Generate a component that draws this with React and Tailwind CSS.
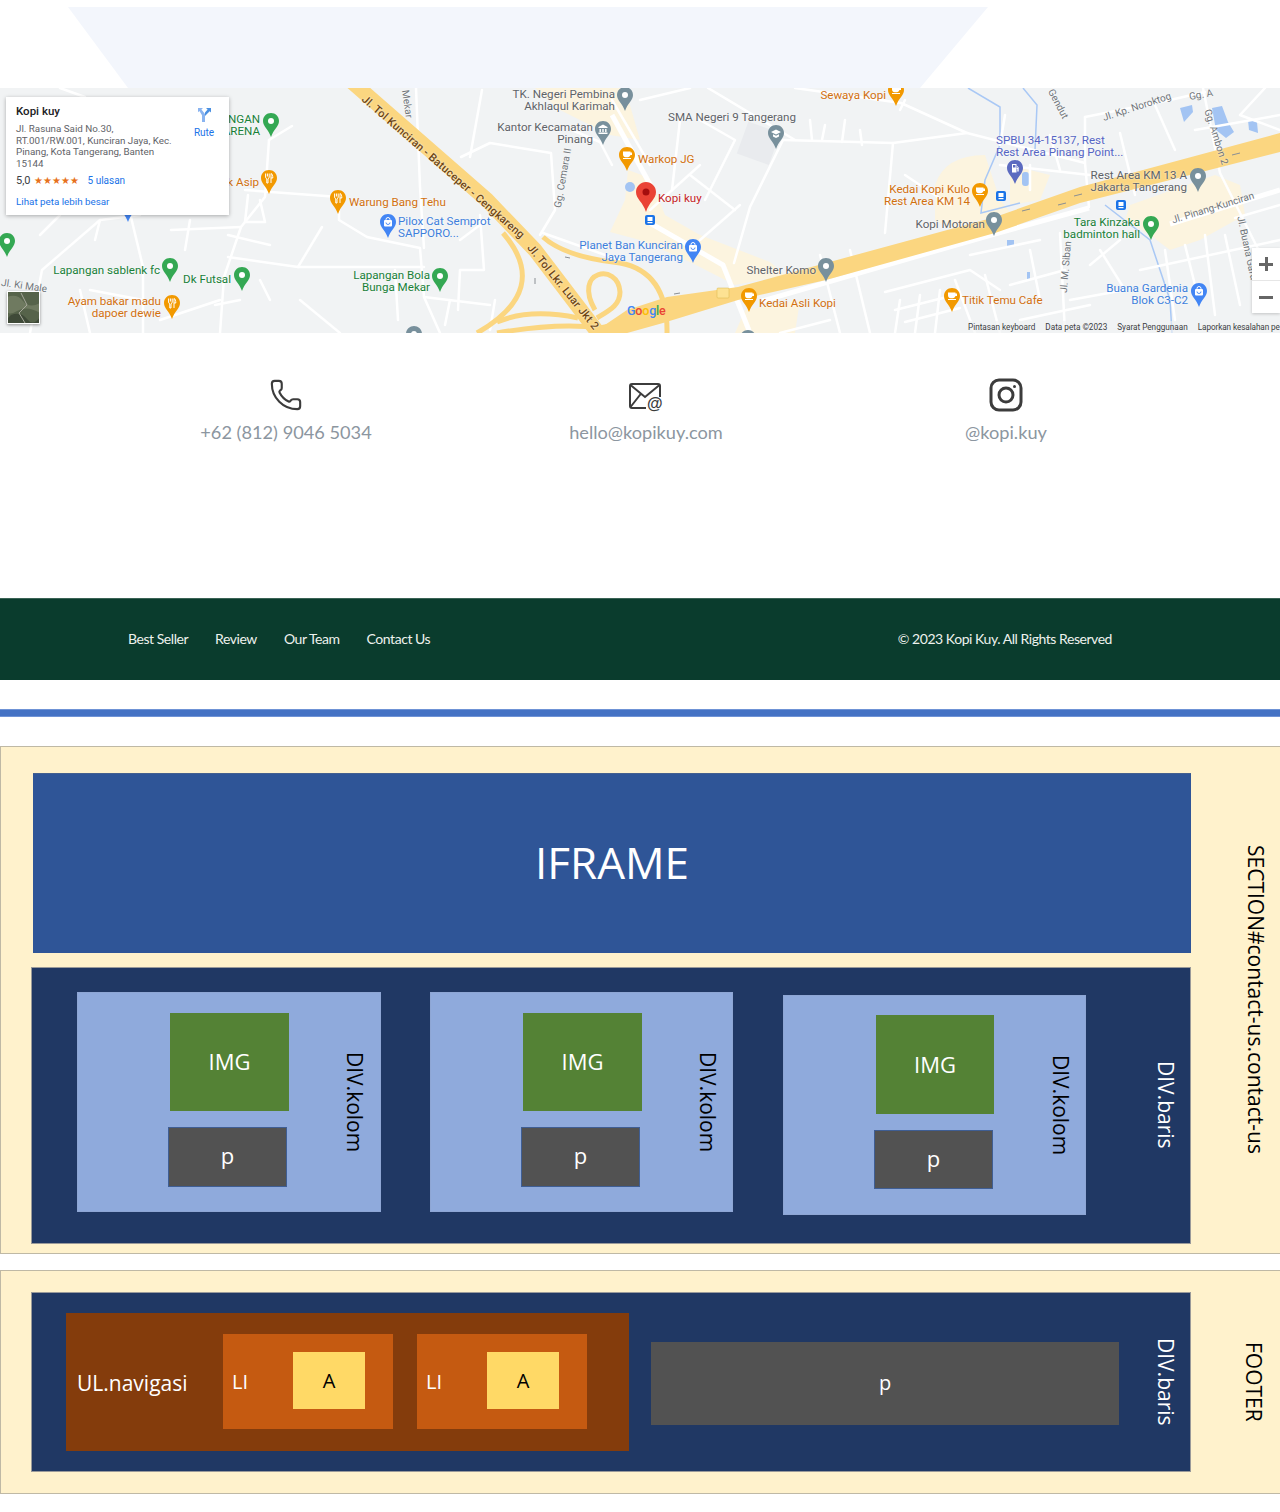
import React from 'react';
import { Phone } from 'lucide-react';

// everything on the map is in page coordinates, the svg viewBox starts at y=88
const pale = [
  'M535 88 L625 88 L640 140 L610 135 L560 110 Z',
  'M628 170 L650 178 L665 215 L700 235 L770 262 L785 275 L735 285 L690 262 L640 240 L610 232 L625 200 Z',
  'M935 185 Q945 155 985 155 L1000 200 L1010 212 L950 228 L935 220 Z',
  'M1130 205 L1215 175 L1240 185 L1245 215 L1200 240 L1170 250 L1150 235 L1125 220 Z',
  'M745 310 L800 300 L795 333 L735 333 Z',
  'M1010 165 L1050 175 L1040 200 L1010 205 Z',
];

const minorRoads = [
  'M245 190 L339 197 L339 220 L367 237 L420 248 L424 297 L490 305',
  'M269 140 L265 197 L241 227 L224 277 L220 333',
  'M130 213 L143 267 L143 333',
  'M171 230 L241 227',
  'M228 257 L298 267 L424 267',
  'M298 267 L322 227',
  'M416 88 L420 187 L424 248',
  'M461 157 L490 143 L551 153 L555 210 L540 235',
  'M482 90 L470 157',
  'M269 140 L292 126',
  'M60 88 L85 97',
  'M140 215 L100 220 L42 270 L30 333',
  'M90 290 L143 300',
  'M160 320 L220 300',
  'M190 220 L185 250',
  'M260 200 L265 222 L245 222',
  'M248 195 L245 222',
  'M228 235 L270 245',
  'M60 215 L40 235',
  'M100 220 L95 240',
  'M80 290 L90 333',
  'M240 300 L215 305',
  'M260 280 L270 300',
  'M300 300 L340 333',
  'M395 270 L398 320',
  'M424 297 L440 333',
  'M450 300 L445 325',
  'M495 300 L490 330',
  'M460 240 L500 210',
  'M480 215 L484 270 L460 270 L458 310',
  'M572 130 L600 142 L612 165',
  'M612 100 L650 165',
  'M543 233 L625 262',
  'M795 88 L901 103 L967 133 L893 143 L783 140',
  'M783 140 L750 207 L734 263',
  'M893 143 L885 233',
  'M967 133 L1085 163 L1089 207',
  'M1085 117 L1170 100 L1205 92',
  'M1085 117 L1085 163',
  'M1203 88 L1220 173 L1265 263',
  'M1120 133 L1135 195',
  'M1155 105 L1175 150',
  'M700 120 L735 140 L705 200',
  'M680 120 L672 190',
  'M690 175 L735 210',
  'M650 210 L700 165',
  'M700 240 L740 205',
  'M708 88 L795 140',
  'M810 120 L812 140',
  'M825 125 L822 140',
  'M845 120 L842 142',
  'M860 130 L862 145',
  'M900 110 L905 100',
  'M1060 233 L1065 333',
  'M885 292 L970 270 L1000 290',
  'M895 333 L900 300',
  'M915 333 L920 295',
  'M935 333 L940 290',
  'M955 280 L975 333',
  'M895 310 L955 295',
  'M905 322 L960 308',
  'M985 275 L1000 333',
  'M970 255 L1040 240',
  'M1010 285 L1065 270',
  'M1020 320 L1090 305',
  'M1030 250 L1040 300',
  'M1100 250 L1125 290 L1070 300',
  'M1120 240 L1090 265',
  'M1165 250 L1175 320',
  'M1185 245 L1195 285',
  'M1205 235 L1215 315',
  'M1225 235 L1240 305',
  'M1235 218 L1280 205',
  'M1140 270 L1280 240',
  'M1265 88 L1240 115 L1280 130',
  'M1195 130 L1280 115',
  'M1000 165 L1090 175',
  'M1030 165 L1030 190',
  'M1000 145 L1005 115',
  'M1050 135 L1060 170',
  'M905 175 L950 205',
  'M820 255 L840 333',
  'M850 250 L870 333',
  'M780 333 L830 320',
  'M640 100 L690 88',
];

const majorRoads = [
  'M650 223 L723 265 L750 333',
  'M612 115 L652 188',
  'M762 301 L991 235 L1089 208',
  'M1170 224 L1280 190',
];

const yellowRoads = [
  'M503 233 Q552 290 477 333',
  'M595 310 C572 270 618 262 620 292 C620 305 610 310 597 318',
  'M543 237 Q565 257 620 263 Q668 272 667 333',
  'M497 322 Q530 308 578 318',
  'M497 333 Q560 322 600 328 Q640 320 700 298',
];

// tip of each pin = top + 24
const pins = [
  { x: 128, top: 198, kind: 'shop', color: '#4285f4' },
  { x: 271, top: 113, kind: 'dot', color: '#34a853' },
  { x: 7, top: 233, kind: 'dot', color: '#34a853' },
  { x: 170, top: 258, kind: 'dot', color: '#34a853' },
  { x: 242, top: 267, kind: 'dot', color: '#34a853' },
  { x: 440, top: 268, kind: 'dot', color: '#34a853' },
  { x: 1151, top: 216, kind: 'dot', color: '#34a853' },
  { x: 269, top: 170, kind: 'fork', color: '#f29900' },
  { x: 338, top: 190, kind: 'fork', color: '#f29900' },
  { x: 172, top: 295, kind: 'fork', color: '#f29900' },
  { x: 388, top: 214, kind: 'shop', color: '#4285f4' },
  { x: 693, top: 239, kind: 'shop', color: '#4285f4' },
  { x: 1199, top: 283, kind: 'shop', color: '#4285f4' },
  { x: 625, top: 87, kind: 'dot', color: '#78909c' },
  { x: 603, top: 121, kind: 'bank', color: '#78909c' },
  { x: 776, top: 125, kind: 'cap', color: '#78909c' },
  { x: 994, top: 212, kind: 'dot', color: '#78909c' },
  { x: 826, top: 258, kind: 'dot', color: '#78909c' },
  { x: 1198, top: 168, kind: 'dot', color: '#78909c' },
  { x: 414, top: 326, kind: 'dot', color: '#78909c' },
  { x: 748, top: 330, kind: 'dot', color: '#78909c' },
  { x: 1015, top: 160, kind: 'fuel', color: '#5c6bc0' },
  { x: 627, top: 147, kind: 'cup', color: '#f29900' },
  { x: 896, top: 82, kind: 'cup', color: '#f29900' },
  { x: 980, top: 183, kind: 'cup', color: '#f29900' },
  { x: 749, top: 288, kind: 'cup', color: '#f29900' },
  { x: 952, top: 288, kind: 'cup', color: '#f29900' },
];

const transit = [[650, 220], [1001, 196], [1121, 205]];

const GREEN = 'text-[#188038]';
const ORANGE = 'text-[#d1700f]';
const BLUE = 'text-[#3d7fdc]';
const GRAY = 'text-[#5f6368]';
const PURPLE = 'text-[#5565c4]';

const labels = [
  { lines: ['NGAN', 'ARENA'], x: 260, y: 119, right: true, color: GREEN },
  { lines: ['k Asip'], x: 259, y: 182, right: true, color: ORANGE },
  { lines: ['Warung Bang Tehu'], x: 349, y: 202, color: ORANGE },
  { lines: ['Pilox Cat Semprot', 'SAPPORO...'], x: 398, y: 221, color: BLUE },
  { lines: ['Lapangan sablenk fc'], x: 160, y: 270, right: true, color: GREEN },
  { lines: ['Dk Futsal'], x: 231, y: 279, right: true, color: GREEN },
  { lines: ['Lapangan Bola', 'Bunga Mekar'], x: 430, y: 275, right: true, color: GREEN },
  { lines: ['Ayam bakar madu', 'dapoer dewie'], x: 161, y: 301, right: true, color: ORANGE },
  { lines: ['TK. Negeri Pembina', 'Akhlaqul Karimah'], x: 615, y: 94, right: true, color: GRAY },
  { lines: ['Kantor Kecamatan', 'Pinang'], x: 593, y: 127, right: true, color: GRAY },
  { lines: ['Warkop JG'], x: 638, y: 159, color: ORANGE },
  { lines: ['Kopi kuy'], x: 658, y: 198, color: 'text-[#c5221f]' },
  { lines: ['Planet Ban Kunciran', 'Jaya Tangerang'], x: 683, y: 245, right: true, color: BLUE },
  { lines: ['Sewaya Kopi'], x: 886, y: 95, right: true, color: ORANGE },
  { lines: ['SMA Negeri 9 Tangerang'], x: 668, y: 117, color: GRAY },
  { lines: ['SPBU 34-15137, Rest', 'Rest Area Pinang Point...'], x: 996, y: 140, color: PURPLE },
  { lines: ['Kedai Kopi Kulo', 'Rest Area KM 14'], x: 970, y: 189, right: true, color: ORANGE },
  { lines: ['Kopi Motoran'], x: 985, y: 224, right: true, color: GRAY },
  { lines: ['Rest Area KM 13 A', 'Jakarta Tangerang'], x: 1187, y: 175, right: true, color: GRAY },
  { lines: ['Tara Kinzaka', 'badminton hall'], x: 1140, y: 222, right: true, color: GREEN },
  { lines: ['Shelter Komo'], x: 816, y: 270, right: true, color: GRAY },
  { lines: ['Kedai Asli Kopi'], x: 759, y: 303, color: ORANGE },
  { lines: ['Titik Temu Cafe'], x: 962, y: 300, color: ORANGE },
  { lines: ['Buana Gardenia', 'Blok C3-C2'], x: 1188, y: 288, right: true, color: BLUE },
];

const BROWN = 'text-[#6d4513] font-medium text-[11px] tracking-[0.2px]';
const STREET = 'text-[#70757a] text-[10px]';

const roadLabels = [
  { text: 'Jl. Tol Kunciran - Batuceper - Cengkareng', x: 443, y: 167, deg: 41, cls: BROWN },
  { text: 'Jl. Tol Lkr. Luar Jkt 2', x: 563, y: 287, deg: 51, cls: BROWN },
  { text: 'Mekar', x: 407, y: 104, deg: 82, cls: STREET },
  { text: 'Gg. Cemara II', x: 563, y: 178, deg: -80, cls: STREET },
  { text: 'Gendut', x: 1058, y: 104, deg: 62, cls: STREET },
  { text: 'Jl. Kp. Noroktog', x: 1137, y: 107, deg: -18, cls: STREET },
  { text: 'Gg. A', x: 1201, y: 95, deg: -10, cls: STREET },
  { text: 'Gg. Ambon 2', x: 1216, y: 137, deg: 72, cls: STREET },
  { text: 'Jl. Pinang-Kunciran', x: 1213, y: 208, deg: -17, cls: STREET },
  { text: 'Jl. Buana Garu', x: 1247, y: 248, deg: 78, cls: STREET },
  { text: 'Jl. M. Siban', x: 1066, y: 267, deg: -85, cls: STREET },
  { text: 'Jl. Ki Male', x: 24, y: 286, deg: 8, cls: STREET },
];

const Glyph = ({ kind }) => {
  if (kind === 'dot') return <circle cx="8" cy="8" r="3" fill="#fff" />;
  if (kind === 'fork') {
    return (
      <path
        d="M4.600 3.500v3.600c0 1 .6 1.500 1.200 1.700V13h1.200V8.800c.6-.2 1.200-.7 1.200-1.700V3.500M6.400 3.500v3M10 13V3.500c1.400.4 1.800 2.400 1.800 4.500H10"
        fill="none"
        stroke="#fff"
        strokeWidth="1"
      />
    );
  }
  if (kind === 'cup') {
    return (
      <g fill="#fff">
        <path d="M4 4.500h7.500v1H13v2.500h-1.600c-.3 1.400-1.400 2.200-2.600 2.200H6.600C5.200 10.200 4 9 4 7.500z" />
        <rect x="4" y="11" width="8" height="1" />
      </g>
    );
  }
  if (kind === 'shop') {
    return (
      <g>
        <rect x="4" y="6" width="8" height="6.500" rx="1" fill="#fff" />
        <path d="M6 7V5.500a2 2 0 0 1 4 0V7" fill="none" stroke="#fff" strokeWidth="1" />
        <path d="M6 8.500a2 2 0 0 0 4 0" fill="none" stroke="#4285f4" strokeWidth="0.900" />
      </g>
    );
  }
  if (kind === 'bank') {
    return <path d="M8 3.500 12.500 6v1h-9V6zM4.500 8h1.400v3H4.500zM7.300 8h1.400v3H7.300zM10.100 8h1.400v3h-1.400zM3.500 11.500h9V13h-9z" fill="#fff" />;
  }
  if (kind === 'cap') {
    return <path d="M8 4.500 13 7l-5 2.500L3 7zM5 9.300 8 10.800l3-1.500V11.500L8 13l-3-1.500z" fill="#fff" />;
  }
  return <path d="M5 4h4.500v8.500H5zM6 5v2.500h2.500V5zM10.200 6l1.500 1.500V11a.7.7 0 0 1-1.400 0V9h-.5V8h1V7.800L9.900 6.700z" fill="#fff" />;
};

const Pin = ({ x, top, kind, color }) => (
  <g transform={`translate(${x - 8} ${top})`}>
    <path d="M8 0C3.500 0 0 3.500 0 8c0 5.500 5.500 8.500 8 16 2.500-7.500 8-10.500 8-16 0-4.500-3.500-8-8-8z" fill={color} />
    <Glyph kind={kind} />
  </g>
);

const MapDrawing = () => (
  <svg className="absolute inset-0 block" width="1280" height="245" viewBox="0 88 1280 245">
    <rect x="0" y="88" width="1280" height="245" fill="#f1f3f4" />
    {pale.map((d) => <path key={d} d={d} fill="#fcf4df" />)}
    <rect x="742" y="126" width="34" height="34" fill="#e9ebee" transform="rotate(20 758 142)" />

    <g fill="none" stroke="#a9c8f5" strokeWidth="1.500">
      <path d="M968 88 L1000 107 L1000 145 L985 180 L981 213 L1020 203" />
      <path d="M1105 205 L1150 240 L1170 300 L1172 333" />
      <path d="M1023 88 L1037 105 L1035 150" />
    </g>
    <g fill="#a3c4f3">
      <path d="M1180 108 L1192 105 L1193 112 L1184 122z" />
      <path d="M1212 108 L1222 106 L1228 122 L1234 132 L1226 138 L1216 130z" />
      <path d="M1248 120 L1257 122 L1258 133 L1249 130z" />
      <rect x="1007" y="240" width="7" height="6" />
      <rect x="1022" y="172" width="7" height="14" rx="3" />
      <rect x="1027" y="272" width="3" height="8" />
      <circle cx="630" cy="187" r="5" />
    </g>

    <g fill="none" stroke="#fff" strokeWidth="2.500" strokeLinejoin="round" strokeLinecap="round">
      {minorRoads.map((d) => <path key={d} d={d} />)}
    </g>
    <g fill="none" stroke="#fff" strokeWidth="5" strokeLinejoin="round">
      {majorRoads.map((d) => <path key={d} d={d} />)}
    </g>

    <g fill="none" stroke="#fbd680" strokeWidth="5" strokeLinejoin="round">
      {yellowRoads.map((d) => <path key={d} d={d} />)}
    </g>
    <path d="M352 82 L487 200 L535 250 L602 338" fill="none" stroke="#fbd680" strokeWidth="15" strokeLinejoin="round" />
    <path d="M590 335 L627 310 L667 297 L738 287 L826 263 L995 217 L1080 187 L1280 133 L1280 152 L1080 203 L995 233 L826 280 L738 300 L663 323 L620 335Z" fill="#fbd680" />

    <g fill="none" stroke="#8a8f94" strokeWidth="1">
      <path d="M1074 196 L1082 194M1022 211 L1030 209M1240 153 L1232 155M1066 203 L1058 205" />
      <path d="M565 257 L570 258M674 294 L680 293M535 284 L535 278" />
    </g>

    <rect x="717" y="288" width="12" height="10" rx="1" fill="#fde293" stroke="#d9b44a" strokeWidth="0.500" />

    {pins.map((p) => <Pin key={`${p.x}-${p.top}`} {...p} />)}

    {transit.map(([x, y]) => (
      <g key={x} transform={`translate(${x - 5} ${y - 5})`}>
        <rect width="10" height="10" rx="2" fill="#1a73e8" />
        <rect x="2.500" y="2" width="5" height="4" fill="#fff" />
        <rect x="2.500" y="7" width="5" height="1.200" fill="#fff" />
      </g>
    ))}

    <g transform="translate(636 182)">
      <path d="M10 0C4.500 0 0 4.500 0 10c0 7 7 10 10 20 3-10 10-13 10-20 0-5.500-4.500-10-10-10z" fill="#ea4335" />
      <circle cx="10" cy="10" r="3.500" fill="#a50e0e" />
    </g>
  </svg>
);

const RouteIcon = () => (
  <svg width="15" height="16" viewBox="0 0 15 16">
    <path d="M1 1h5l-1.600 1.600L8 7v8H5V8.200L2.400 4 1 5.300z" fill="#8ab4f0" />
    <path d="M14 1 9 1l1.600 1.600L8 5.500V9l4.700-4.700L14 5.600z" fill="#4a90e2" />
  </svg>
);

const Satellite = () => (
  <svg className="absolute left-[7px] top-[203px] shadow-[0_1px_3px_rgba(0,0,0,0.4)]" width="33" height="33" viewBox="0 0 33 33">
    <rect width="33" height="33" fill="#56634a" />
    <path d="M0 6 Q10 2 16 10 T33 12 V22 Q20 14 10 20 T0 18Z" fill="#6f7a60" />
    <path d="M4 24 Q14 20 20 28 T33 26 V33 H0 V28Z" fill="#3f4a38" />
    <path d="M14 2 L20 14 L12 22 L18 32" fill="none" stroke="#a6a89a" strokeWidth="1" />
    <rect x="0.500" y="0.500" width="32" height="32" fill="none" stroke="#fff" />
  </svg>
);

const InfoCard = () => (
  <div className="absolute left-[6px] top-[9px] z-10 flex h-[118px] w-[223px] flex-col bg-white pl-[10px] pt-[8px] shadow-[0_1px_4px_rgba(0,0,0,0.3)] font-['Roboto',sans-serif]">
    <div className="flex">
      <div className="w-[165px]">
        <p className="text-[11.500px] font-medium leading-[13px] text-[#202124]">Kopi kuy</p>
        <p className="mt-[5px] text-[9.800px] leading-[11.500px] text-[#5f6368]">
          Jl. Rasuna Said No.30, RT.001/RW.001, Kunciran Jaya, Kec. Pinang, Kota Tangerang, Banten 15144
        </p>
      </div>
      <div className="ml-[5px] flex w-[36px] flex-col items-center pt-[2px]">
        <RouteIcon />
        <span className="mt-[4px] text-[10px] leading-[12px] text-[#1a73e8]">Rute</span>
      </div>
    </div>
    <div className="mt-[5px] flex h-[14px] items-center">
      <span className="text-[11px] leading-[14px] text-[#3c4043]">5,0</span>
      <span className="ml-[3px] w-[46px] whitespace-nowrap text-[9.500px] leading-[14px] text-[#e7711b]">★★★★★</span>
      <span className="ml-[8px] text-[10px] leading-[14px] text-[#1a73e8]">5 ulasan</span>
    </div>
    <a className="mt-[8px] text-[9.800px] leading-[12px] text-[#1a73e8]">Lihat peta lebih besar</a>
  </div>
);

const MapSection = () => (
  <div className="relative h-[245px] overflow-hidden font-['Roboto',sans-serif]">
    <MapDrawing />

    {labels.map((l) => (
      <div
        key={l.lines[0]}
        className={`absolute whitespace-nowrap text-[11.600px] leading-[11.500px] [text-shadow:0_0_2px_#fff] ${l.color} ${l.right ? 'text-right' : 'text-left'}`}
        style={{ top: l.y - 93, ...(l.right ? { right: 1280 - l.x } : { left: l.x }) }}
      >
        {l.lines.map((line) => <div key={line}>{line}</div>)}
      </div>
    ))}

    {roadLabels.map((r) => (
      <div
        key={r.text}
        className={`absolute whitespace-nowrap leading-none [text-shadow:0_0_2px_#fff] ${r.cls}`}
        style={{ left: r.x, top: r.y - 88, transform: `translate(-50%, -50%) rotate(${r.deg}deg)` }}
      >
        {r.text}
      </div>
    ))}

    <div className="absolute left-[627px] top-[216px] text-[12.500px] font-medium leading-[14px] tracking-[-0.2px]">
      <span className="text-[#4285f4]">G</span>
      <span className="text-[#ea4335]">o</span>
      <span className="text-[#fbbc05]">o</span>
      <span className="text-[#4285f4]">g</span>
      <span className="text-[#34a853]">l</span>
      <span className="text-[#ea4335]">e</span>
    </div>

    <Satellite />
    <InfoCard />

    <div className="absolute right-0 top-[160px] flex h-[65px] w-[28px] flex-col bg-white shadow-[0_1px_3px_rgba(0,0,0,0.2)]">
      <div className="flex flex-1 items-center justify-center border-b border-[#e6e6e6]">
        <span className="relative block h-[14px] w-[14px] bg-[linear-gradient(#666,#666)] bg-[length:14px_3px] bg-center bg-no-repeat">
          <span className="absolute left-[5.500px] top-0 h-[14px] w-[3px] bg-[#666]" />
        </span>
      </div>
      <div className="flex flex-1 items-center justify-center">
        <span className="block h-[3px] w-[14px] bg-[#666]" />
      </div>
    </div>

    <div className="absolute bottom-0 right-0 flex h-[12px] w-[312px] items-center gap-[10px] whitespace-nowrap bg-[#f1f3f4]/60 text-[8.200px] leading-[12px] text-[#3c4043]">
      <span>Pintasan keyboard</span>
      <span>Data peta ©2023</span>
      <span>Syarat Penggunaan</span>
      <span className="tracking-[-0.1px]">Laporkan kesalahan pe</span>
    </div>
  </div>
);

const MailIcon = () => (
  <div className="relative h-[34px] w-[34px]">
    <svg width="34" height="34" viewBox="0 0 34 34" fill="none" stroke="#3c3c3c" strokeWidth="2">
      <path d="M17 30H3a2 2 0 0 1-2-2V8a2 2 0 0 1 2-2h26a2 2 0 0 1 2 2v11" />
      <path d="M1.500 7 16 19 30.500 7M1.500 29l11-14" />
    </svg>
    <span className="absolute left-[18px] top-[16px] font-['Liberation_Sans',sans-serif] text-[16px] font-bold leading-[20px] text-[#3c3c3c]">@</span>
  </div>
);

const InstagramIcon = () => (
  <svg width="34" height="34" viewBox="0 0 34 34" fill="none" stroke="#3c3c3c" strokeWidth="3">
    <rect x="2" y="2" width="30" height="30" rx="8" />
    <circle cx="17" cy="17" r="7" />
    <circle cx="25.500" cy="8.500" r="1.500" fill="#3c3c3c" stroke="none" />
  </svg>
);

const contacts = [
  { icon: <Phone size={34} strokeWidth={1.500} color="#3c3c3c" />, text: '+62 (812) 9046 5034' },
  { icon: <MailIcon />, text: 'hello@kopikuy.com' },
  { icon: <InstagramIcon />, text: '@kopi.kuy' },
];

const ContactRow = () => (
  <div className="grid h-[265px] grid-cols-3 pl-[106px] pr-[94px] pt-[45px] font-['Lato',sans-serif]">
    {contacts.map((c) => (
      <div key={c.text} className="flex flex-col items-center">
        {c.icon}
        <p className="mt-[8px] text-[18.200px] leading-[24px] text-[#8c96a0]">{c.text}</p>
      </div>
    ))}
  </div>
);

const SiteFooter = () => (
  <div className="flex h-[82px] items-center justify-between border-t border-[#3b6355] bg-[#0a3c2d] pb-[3px] pl-[128px] pr-[168px] font-['Lato',sans-serif] text-[14px] tracking-[-0.45px] text-[#eef2ee]">
    <nav className="flex gap-[27px]">
      <a>Best Seller</a>
      <a>Review</a>
      <a>Our Team</a>
      <a>Contact Us</a>
    </nav>
    <p>© 2023 Kopi Kuy. All Rights Reserved</p>
  </div>
);

const OPEN = "font-['Open_Sans',sans-serif]";

const Vertical = ({ className, children }) => (
  <span className={`whitespace-nowrap [writing-mode:vertical-rl] ${className}`}>{children}</span>
);

const Kolom = ({ wrap, stack, img, para }) => (
  <div className={`flex h-[220px] border border-[#8ea6d4] bg-[#8faadc] pl-[91px] ${wrap}`}>
    <div className={`flex w-[121px] flex-col ${stack}`}>
      <div className={`ml-[1px] flex items-center justify-center bg-[#548235] pb-[1px] text-[22px] text-white ${img}`}>IMG</div>
      <div className={`-ml-[1px] flex items-center justify-center border border-[#3f5e94] bg-[#525252] pb-[3px] text-[22px] text-white ${para}`}>p</div>
    </div>
    <Vertical className="ml-[53px] self-center text-[21px] leading-[24px] text-black">DIV.kolom</Vertical>
  </div>
);

const ContactDiagram = () => (
  <section className={`flex h-[508px] border-y border-l border-[#bfb9a5] bg-[#fff2cc] pt-[26px] ${OPEN}`}>
    <div className="flex w-[1190px] flex-col">
      <div className="ml-[32px] flex h-[180px] w-[1158px] items-center justify-center border-t border-[#44608f] bg-[#2f5597] pb-[3px] text-[44px] text-white">
        IFRAME
      </div>
      <div className="ml-[30px] mt-[14px] flex h-[277px] w-[1160px] border border-[#9a9a9a] bg-[#203864] pl-[45px] pt-[24px]">
        <div className="flex gap-[49px]">
          <Kolom wrap="w-[304px]" stack="pt-[20px]" img="h-[98px] w-[119px]" para="mt-[16px] h-[60px] w-[119px]" />
          <Kolom wrap="w-[303px]" stack="pt-[20px]" img="h-[98px] w-[119px]" para="mt-[16px] h-[60px] w-[119px]" />
          <Kolom wrap="ml-[1px] mt-[3px] w-[303px]" stack="pt-[19px]" img="h-[99px] w-[118px]" para="mt-[16px] h-[59px] w-[119px]" />
        </div>
        <Vertical className="ml-[68px] self-center pb-[26px] text-[21px] leading-[24px] text-white">DIV.baris</Vertical>
      </div>
    </div>
    <div className="flex flex-1 items-center justify-end pb-[28px] pr-[12px]">
      <Vertical className="text-[21px] leading-[24px] text-black">SECTION#contact-us.contact-us</Vertical>
    </div>
  </section>
);

const NavItem = () => (
  <li className="flex h-[95px] w-[170px] self-start bg-[#c55a11] pl-[9px] text-white">
    <span className="w-[61px] self-center text-[20px]">LI</span>
    <a className="mt-[18px] flex h-[57px] w-[72px] items-center justify-center bg-[#ffd966] text-[20px] text-black">A</a>
  </li>
);

const FooterDiagram = () => (
  <footer className={`mt-[16px] flex h-[224px] border-y border-l border-[#bfb9a5] bg-[#fff2cc] pt-[21px] ${OPEN}`}>
    <div className="ml-[30px] flex h-[180px] w-[1160px] border border-[#9a9a9a] bg-[#203864] pl-[34px] pt-[20px]">
      <ul className="flex h-[138px] w-[563px] items-center bg-[#843c0c] pl-[11px] pt-[21px] text-white">
        <li className="-mt-[18px] w-[146px] text-[21px]">UL.navigasi</li>
        <NavItem />
        <div className="w-[24px]" />
        <NavItem />
      </ul>
      <p className="ml-[22px] mt-[29px] flex h-[83px] w-[468px] items-center justify-center bg-[#525252] pb-[1px] text-[20px] text-white">p</p>
      <Vertical className="ml-[35px] self-center pb-[20px] text-[21px] leading-[24px] text-white">DIV.baris</Vertical>
    </div>
    <div className="flex flex-1 items-center justify-end pb-[21px] pr-[14px]">
      <Vertical className="text-[21px] leading-[24px] text-black">FOOTER</Vertical>
    </div>
  </footer>
);

export default function App() {
  return (
    <div className="min-h-[1512px] w-[1280px] overflow-hidden bg-white">
      <div className="h-[88px] pt-[7px]">
        <svg className="ml-[68px] block" width="920" height="81" viewBox="0 0 920 81">
          <path d="M0 0H920L852 81H60Z" fill="#f3f6fc" />
        </svg>
      </div>
      <MapSection />
      <ContactRow />
      <SiteFooter />
      <div className="mt-[29px] h-[8px] border-y border-[#6f93d6] bg-[#4472c4]" />
      <div className="mt-[29px]">
        <ContactDiagram />
        <FooterDiagram />
      </div>
    </div>
  );
}
